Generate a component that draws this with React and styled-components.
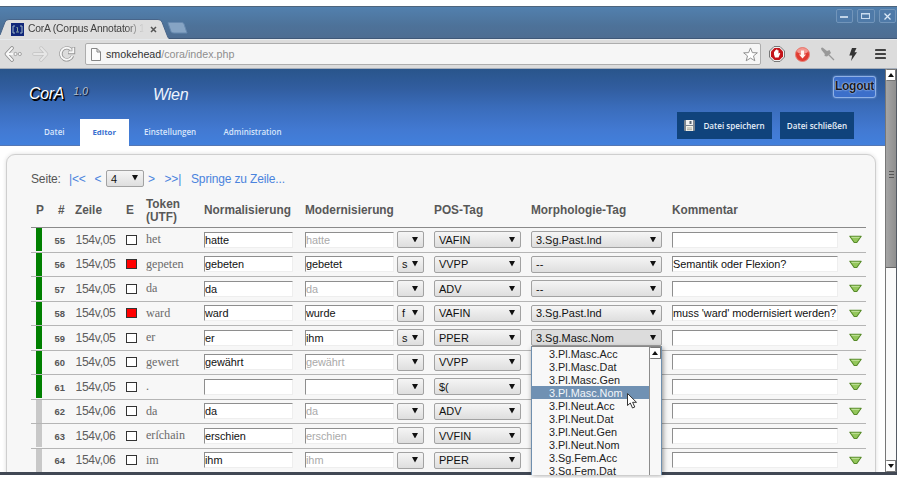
import React from 'react';
import styled, { createGlobalStyle, css } from 'styled-components';

const GlobalStyle = createGlobalStyle`
    * {
        box-sizing: border-box;
    }
    body {
        margin: 0;
        background: #fff;
        font-family: "Liberation Sans", Arial, sans-serif;
        overflow: hidden;
    }
    svg {
        display: block;
        flex: none;
    }
`

const Desktop = styled.div`
    position: relative;
    width: 897px;
    height: 478px;
    padding-top: 6px;
    overflow: hidden;
    background: #fff;
`

const BrowserWindow = styled.div`
    display: flex;
    flex-direction: column;
    height: 469px;
    border-bottom: 3px solid #414854;
`

/* window title with the tabs */

const TitleBar = styled.div`
    display: flex;
    align-items: flex-end;
    flex: none;
    height: 33px;
    border-top: 1px solid #4d647c;
    border-bottom: 1px solid #3f5878;
    background: linear-gradient(#5280ae, #4d7299 60%, #4e6d92);
`

const Tab = styled.div`
    position: relative;
    flex: none;
    width: 169px;
    height: 20px;
    margin-bottom: -1px;
`

const TabShape = styled.svg`
    position: absolute;
    left: 0;
    top: 0;
`

const TabContent = styled.div`
    position: relative;
    display: flex;
    align-items: center;
    height: 20px;
    padding-left: 11px;
`

const TabTitle = styled.div`
    width: 116px;
    margin-left: 4px;
    overflow: hidden;
    white-space: nowrap;
    font-size: 10.3px;
    letter-spacing: -0.18px;
    line-height: 14px;
    color: #404040;
    mask-image: linear-gradient(to right, #000 84%, transparent);
`

const NewTab = styled.svg`
    margin: 0 0 4px -2px;
`

const WindowButtons = styled.div`
    display: flex;
    gap: 4px;
    align-self: flex-start;
    margin: 2px 1px 0 auto;
`

const WindowButton = styled.div`
    display: flex;
    align-items: center;
    justify-content: center;
    width: 17.5px;
    height: 14px;
    border: 1px solid #7295ba;
    border-radius: 2px;
    background: #4f7aa8;
`

/* address bar */

const Toolbar = styled.div`
    display: flex;
    align-items: center;
    flex: none;
    height: 30px;
    padding-left: 4px;
    border-top: 1px solid #e6e9ec;
    border-bottom: 1px solid #a5adb9;
    background: #dcdcdc;
`

const NavIcons = styled.div`
    display: flex;
    align-items: center;
    width: 81px;
    gap: 9px;
`

const AddressBox = styled.div`
    display: flex;
    align-items: center;
    width: 676px;
    height: 22px;
    padding: 0 2px 0 5px;
    border: 1px solid #adadad;
    border-radius: 2px;
    background: #f6f6f6;
`

const Url = styled.div`
    flex: 1;
    margin-left: 5px;
    font-size: 10.7px;
    line-height: 14px;
    color: #8e8e8e;
    b {
        font-weight: normal;
        color: #333;
    }
`

const Extensions = styled.div`
    display: flex;
    align-items: center;
    flex: 1;
    padding-left: 7px;
`

const Extension = styled.div`
    display: flex;
    align-items: center;
    justify-content: center;
    width: ${props => props.$width || 25}px;
`

/* page */

const Viewport = styled.div`
    display: flex;
    flex: 1;
    min-height: 0;
    border-right: 1px solid #555b64;
`

const Page = styled.div`
    width: 885px;
    height: 403px;
    overflow: hidden;
    background: #fff;
`

const Header = styled.div`
    display: flex;
    flex-direction: column;
    justify-content: space-between;
    height: 77px;
    border-bottom: 1px solid #5577b4;
    background: linear-gradient(#29558b, #315d9f 25%, #3a6cba 50%, #4279d2 80%, #4280dc);
`

const HeaderTop = styled.div`
    display: flex;
    align-items: flex-start;
    height: 43px;
    padding: 7px 9px 0 29px;
`

const Logo = styled.div`
    width: 44.5px;
    margin-top: 9px;
    font-size: 15.8px;
    letter-spacing: -0.2px;
    line-height: 18px;
    font-style: italic;
    color: #fff;
    text-shadow: 1px 1px 1px #000, 1.5px 1.5px 0 #000;
`

const Version = styled.div`
    width: 79.5px;
    margin-top: 10px;
    font-size: 10.4px;
    line-height: 12px;
    font-style: italic;
    color: #b4bfcf;
    text-shadow: 1px 1px 1px #102040, 1px 1px 0 #1d2f50;
`

const Project = styled.div`
    flex: 1;
    margin-top: 9px;
    font-size: 16px;
    letter-spacing: -0.2px;
    line-height: 19px;
    font-style: italic;
    color: #eef4fd;
`

const Logout = styled.div`
    width: 43px;
    height: 22px;
    border: 1px solid #8fb1e6;
    border-radius: 3px;
    box-shadow: 0 0 2px #86aae4;
    background: #3c6fca;
    font-size: 12px;
    letter-spacing: -0.25px;
    line-height: 19px;
    font-weight: bold;
    text-align: center;
    color: #15181f;
    text-shadow: 0 0 2px #dbe7fa, 0 0 1px #9fc0f3;
`

const HeaderBottom = styled.div`
    display: flex;
    justify-content: space-between;
    height: 34px;
    margin-bottom: -1px;
    padding: 0 31px 0 28px;
`

const Menu = styled.div`
    display: flex;
    align-items: flex-end;
    font-family: "Open Sans", "Noto Sans", sans-serif;
    font-size: 8px;
`

const MenuItem = styled.div`
    width: ${props => props.$width}px;
    height: 27px;
    padding-left: ${props => props.$indent}px;
    line-height: 26px;
    font-weight: 600;
    color: #d8e6fb;
    ${props => props.$active && css`
        background: #fff;
        color: #3a6fd0;
        font-size: 7.8px;
        font-weight: 700;
    `}
`

const FileButtons = styled.div`
    display: flex;
    gap: 8px;
`

const FileButton = styled.div`
    display: flex;
    align-items: center;
    justify-content: center;
    gap: 8px;
    width: ${props => props.$width}px;
    height: 27px;
    background: #10437c;
    color: #e6eef8;
    font-family: "Open Sans", "Noto Sans", sans-serif;
    font-size: 8.1px;
    font-weight: 600;
    white-space: nowrap;
`

const Panel = styled.div`
    width: 870px;
    height: 340px;
    margin: 8px 0 0 6px;
    padding: 0 9px 0 24px;
    border: 1px solid #cfcfcf;
    border-radius: 9px;
    box-shadow: 0 0 4px #ddd;
    background: #f7f7f7;
    color: #555;
`

const Pager = styled.div`
    display: flex;
    align-items: center;
    height: 39px;
    padding-top: 8px;
    font-size: 12px;
    letter-spacing: -0.15px;
    white-space: pre;
`

const PagerLabel = styled.span`
    width: 38px;
`

const PagerLink = styled.span`
    width: ${props => props.$width}px;
    margin-left: ${props => props.$gap || 0}px;
    color: #4a83dd;
`

const GridRow = styled.div`
    display: grid;
    grid-template-columns: 16px 28px 51px 20px 58px 101px 92px 37px 97px 141px 177px 17px;
    align-items: center;
    width: 835px;
`

const HeadRow = styled(GridRow)`
    height: 34px;
    border-bottom: 1px solid #8a8a8a;
    font-size: 11.85px;
    line-height: 12.5px;
    font-weight: bold;
    color: #585858;
`

const HeadCell = styled.div`
    padding-left: ${props => props.$indent || 0}px;
    white-space: pre-line;
`

const Row = styled(GridRow)`
    height: 24.5px;
    border-bottom: 1px solid #b5b5b5;
`

const Progress = styled.div`
    width: 6px;
    height: 23px;
    margin-left: 5px;
    background: ${props => (props.$done ? '#008000' : '#c8c8c8')};
`

const TokenNumber = styled.div`
    padding: 1px 10px 0 0;
    font-size: 9.4px;
    font-weight: bold;
    text-align: right;
`

const LineRef = styled.div`
    padding-left: 0.5px;
    font-size: 12.1px;
    letter-spacing: -0.3px;
    white-space: nowrap;
    color: #5e5e5e;
`

const Checkbox = styled.div`
    width: 11px;
    height: 10px;
    border: 1px solid #333;
    background: ${props => (props.$error ? '#f00' : '#fff')};
`

const Token = styled.div`
    font-family: "Liberation Serif", serif;
    font-size: 12.1px;
    color: #6b6b6b;
`

const Field = styled.div`
    width: ${props => props.$width}px;
    height: 16px;
    border: 1px solid #eee;
    border-top: 1px solid #8e8e8e;
    border-left: 1px solid #8e8e8e;
    background: #fff;
    font-size: 10.9px;
    line-height: 15px;
    letter-spacing: -0.05px;
    white-space: nowrap;
    color: ${props => (props.$suggested ? '#aaa' : '#111')};
`

const SelectBox = styled.div`
    display: flex;
    align-items: center;
    justify-content: space-between;
    width: ${props => props.$width}px;
    height: 17px;
    padding: 0 5px 0 4px;
    border: 1px solid #a2a2a2;
    border-radius: 2px;
    background: ${props => (props.$open ? '#dcdcdc' : 'linear-gradient(#f5f5f5, #dedede)')};
    font-size: 10.95px;
    line-height: 16px;
    letter-spacing: 0;
    white-space: nowrap;
    color: #111;
    svg {
        margin-top: -1px;
    }
`

/* option list of the opened select box */

const Options = styled.div`
    position: absolute;
    left: 531px;
    top: 346px;
    display: flex;
    width: 131px;
    height: 129px;
    overflow: hidden;
    border: 1px solid #6f8fae;
    border-top-color: #888;
    border-bottom: none;
    background: #f8f8f8;
`

const OptionList = styled.div`
    flex: 1;
`

const Option = styled.div`
    height: 13.05px;
    padding-left: 17px;
    font-size: 10.85px;
    line-height: 14px;
    white-space: nowrap;
    color: ${props => (props.$selected ? '#f2f6fa' : '#222')};
    background: ${props => (props.$selected ? '#7091b3' : 'none')};
`

const OptionShadow = styled.div`
    position: absolute;
    left: 531px;
    top: 348px;
    width: 131px;
    height: 127px;
    box-shadow: 1px 0 5px rgba(0, 0, 0, 0.45);
`

const OptionScroll = styled.div`
    width: 12px;
    border-left: 1px solid #8c8c8c;
`

const Scrollbar = styled.div`
    display: flex;
    flex-direction: column;
    width: 11px;
    height: 403px;
    background: #fafafa;
    border-left: 1px solid #777;
`

const ScrollButton = styled.div`
    display: flex;
    align-items: center;
    justify-content: center;
    flex: none;
    height: 12px;
    border: 1px solid #777;
    border-left: none;
    border-radius: 1px;
    background: #fff;
`

const ScrollThumb = styled.div`
    display: flex;
    align-items: center;
    justify-content: center;
    height: 187px;
    margin-bottom: auto;
    border-bottom: 1px solid #666;
    background: linear-gradient(to right, #a5a5a5, #8f8f8f);
`

const Cursor = styled.svg`
    position: absolute;
    left: 626px;
    top: 392px;
`

const Triangle = ({ up, w = 6, h = 4 }) => (
    <svg width={w} height={h} viewBox="0 0 6 4" preserveAspectRatio="none">
        <path d={up ? 'M0 4L3 0L6 4Z' : 'M0 0H6L3 4Z'} fill="#111" />
    </svg>
)

const Select = ({ width, value, open }) => (
    <SelectBox $width={width} $open={open}>
        <span>{value}</span>
        <Triangle w={6} h={5.5} />
    </SelectBox>
)

const GreenArrow = () => (
    <svg width="13" height="9" viewBox="0 0 13 9">
        <path d="M0.800 1.300H12.200L7.800 7.500H5.200Z" fill="#94c75b" stroke="#568a28" strokeWidth="1.100" strokeLinejoin="round" />
        <path d="M2.500 2.400H10.500" stroke="#c0e09a" />
    </svg>
)

const Floppy = () => (
    <svg width="11" height="11" viewBox="0 0 11 11">
        <rect width="11" height="11" rx="1" fill="#7e8791" />
        <rect x="2" y="0" width="7" height="5" fill="#f1f1f1" />
        <rect x="5.5" y="1" width="2" height="3" fill="#596572" />
        <rect x="2" y="6" width="7" height="5" fill="#f5f3ea" />
        <path d="M3 8H8M3 9.7H8" stroke="#8a8a80" strokeWidth="0.7" />
    </svg>
)

const rows = [
    { id: 55, line: '154v,05', token: 'het', norm: 'hatte', mod: 'hatte', suggested: true, flag: '', pos: 'VAFIN', morph: '3.Sg.Past.Ind', done: true },
    { id: 56, line: '154v,05', error: true, token: 'gepeten', norm: 'gebeten', mod: 'gebetet', flag: 's', pos: 'VVPP', morph: '--', comment: 'Semantik oder Flexion?', done: true },
    { id: 57, line: '154v,05', token: 'da', norm: 'da', mod: 'da', suggested: true, flag: '', pos: 'ADV', morph: '--', done: true },
    { id: 58, line: '154v,05', error: true, token: 'ward', norm: 'ward', mod: 'wurde', flag: 'f', pos: 'VAFIN', morph: '3.Sg.Past.Ind', comment: "muss 'ward' modernisiert werden?", done: true },
    { id: 59, line: '154v,05', token: 'er', norm: 'er', mod: 'ihm', flag: 's', pos: 'PPER', morph: '3.Sg.Masc.Nom', open: true, done: true },
    { id: 60, line: '154v,05', token: 'gewert', norm: 'gewährt', mod: 'gewährt', suggested: true, flag: '', pos: 'VVPP', morph: '', done: true },
    { id: 61, line: '154v,05', token: '.', norm: '', mod: '', flag: '', pos: '$(', morph: '', done: true },
    { id: 62, line: '154v,06', token: 'da', norm: 'da', mod: 'da', suggested: true, flag: '', pos: 'ADV', morph: '' },
    { id: 63, line: '154v,06', token: 'erſchain', norm: 'erschien', mod: 'erschien', suggested: true, flag: '', pos: 'VVFIN', morph: '' },
    { id: 64, line: '154v,06', token: 'im', norm: 'ihm', mod: 'ihm', suggested: true, flag: '', pos: 'PPER', morph: '' },
]

const options = [
    '3.Pl.Masc.Acc',
    '3.Pl.Masc.Dat',
    '3.Pl.Masc.Gen',
    '3.Pl.Masc.Nom',
    '3.Pl.Neut.Acc',
    '3.Pl.Neut.Dat',
    '3.Pl.Neut.Gen',
    '3.Pl.Neut.Nom',
    '3.Sg.Fem.Acc',
    '3.Sg.Fem.Dat',
]

const BrowserChrome = () => (
    <>
        <TitleBar>
            <Tab>
                <TabShape width="169" height="20" viewBox="0 0 169 20">
                    <path d="M0 20V16L5 3Q6 0.5 9 0.5H158Q161 0.5 162 3L167 16Q168 19 169 20Z" fill="#dedede" />
                    <path d="M0 16L5 3Q6 0.5 9 0.5H158Q161 0.5 162 3L167 16Q168 19 169 19.5" fill="none" stroke="#48658a" />
                </TabShape>
                <TabContent>
                    <svg width="13" height="13" viewBox="0 0 13 13">
                        <rect width="13" height="13" fill="#11277a" />
                        <path d="M4 3H2V10H4M9 3H11V10H9" fill="none" stroke="#9fb9c9" />
                        <path d="M5.5 4.5H6.5V8.5M5 9H8" fill="none" stroke="#8ba6a0" />
                    </svg>
                    <TabTitle>CorA (Corpus Annotator) 1</TabTitle>
                    <svg width="7" height="7" viewBox="0 0 7 7" style={{ marginLeft: 6 }}>
                        <path d="M1 1L6 6M6 1L1 6" stroke="#555" strokeWidth="1.5" />
                    </svg>
                </TabContent>
            </Tab>
            <NewTab width="21" height="12" viewBox="0 0 21 12">
                <path d="M1 1Q0.5 0.5 2 0.5H15Q16.5 0.5 17 2L20 11H7Q4.500 11 4 9.500Z" fill="#86a4c4" stroke="#6789af" />
            </NewTab>
            <WindowButtons>
                <WindowButton>
                    <svg width="8" height="8" viewBox="0 0 8 8"><path d="M0 5H8" stroke="#dce9f7" strokeWidth="1.6" /></svg>
                </WindowButton>
                <WindowButton>
                    <svg width="9" height="8" viewBox="0 0 9 8"><path d="M0.500 1.500H8.500V6.500H0.500ZM0.500 2H8.500" fill="none" stroke="#c8dbef" strokeWidth="1.1" /></svg>
                </WindowButton>
                <WindowButton>
                    <svg width="7" height="7" viewBox="0 0 7 7"><path d="M0.500 0.500L6.500 6.500M6.500 0.500L0.500 6.500" stroke="#dce9f7" strokeWidth="1.3" /></svg>
                </WindowButton>
            </WindowButtons>
        </TitleBar>
        <Toolbar>
            <NavIcons>
                <svg width="19" height="16" viewBox="0 0 19 16">
                    <path d="M8 2L2.500 8L8 14" fill="none" stroke="#8c8c8c" strokeWidth="3.600" strokeLinejoin="round" strokeLinecap="round" />
                    <path d="M8 2L2.500 8L8 14M3 8H9" fill="none" stroke="#f8f8f8" strokeWidth="2" strokeLinejoin="round" strokeLinecap="round" />
                    <circle cx="11.500" cy="8" r="1.600" fill="#f5f5f5" stroke="#939393" strokeWidth="0.800" />
                    <circle cx="15.800" cy="8" r="1.600" fill="#f5f5f5" stroke="#939393" strokeWidth="0.800" />
                </svg>
                <svg width="17" height="16" viewBox="0 0 17 16">
                    <path d="M9 2L14.500 8L9 14M2 8H12" fill="none" stroke="#c2c2c2" strokeWidth="3.400" strokeLinejoin="round" strokeLinecap="round" />
                    <path d="M9 2L14.500 8L9 14M2 8H13" fill="none" stroke="#e6e6e6" strokeWidth="2" strokeLinejoin="round" strokeLinecap="round" />
                </svg>
                <svg width="18" height="18" viewBox="0 0 18 18">
                    <path d="M14.500 11A6 6 0 1 1 13 4.500M15.500 2V7.500H10" fill="none" stroke="#939393" strokeWidth="3.400" />
                    <path d="M14.300 11A6 6 0 1 1 13 4.500M15.300 2.500V7.300H10.500" fill="none" stroke="#f7f7f7" strokeWidth="1.900" />
                </svg>
            </NavIcons>
            <AddressBox>
                <svg width="10" height="13" viewBox="0 0 10 13">
                    <path d="M0.500 0.500H6L9.500 4V12.500H0.500ZM6 0.500V4H9.500" fill="#fcfcfc" stroke="#858585" />
                </svg>
                <Url><b>smokehead</b>/cora/index.php</Url>
                <svg width="15" height="15" viewBox="0 0 16 16">
                    <path d="M8 1L10 6L15.300 6.200L11.200 9.500L12.600 14.700L8 11.800L3.400 14.700L4.800 9.500L0.700 6.200L6 6Z" fill="#fff" stroke="#8c8c8c" />
                </svg>
            </AddressBox>
            <Extensions>
                <Extension $width={17}>
                    <svg width="16" height="16" viewBox="0 0 16 16">
                        <path d="M5 0.500H11L15.500 5V11L11 15.500H5L0.500 11V5Z" fill="#eee" stroke="#777" />
                        <path d="M5.500 2H10.500L14 5.500V10.500L10.500 14H5.500L2 10.500V5.500Z" fill="#c4141a" />
                        <path d="M5 8.500V5.500H6V4.200H7V3.600H8.300V4.200H9.500V7.500L11 6.700L11.200 7.600L9.500 11.500H6Z" fill="#fff" />
                    </svg>
                </Extension>
                <Extension $width={34}>
                    <svg width="15" height="15" viewBox="0 0 15 15">
                        <circle cx="7.500" cy="7.500" r="7" fill="#e03b31" stroke="#e78177" />
                        <ellipse cx="7.500" cy="4" rx="5.500" ry="3" fill="#f39a92" />
                        <path d="M6 3.500H9V7.500H11L7.500 11.500L4 7.500H6Z" fill="#fff4ee" />
                    </svg>
                </Extension>
                <Extension $width={17}>
                    <svg width="15" height="14" viewBox="0 0 15 14">
                        <path d="M1 1L2.500 0.500L7 4L9.500 3L11 6L7 9.500L4.500 9L4.800 7L1.500 3Z" fill="#999" />
                        <path d="M8 7L14 13" stroke="#999" strokeWidth="1.200" />
                    </svg>
                </Extension>
                <Extension $width={34}>
                    <svg width="8" height="13" viewBox="0 0 8 13">
                        <path d="M3 0H7.500L5.500 4.200H8L2 13L3.200 7.500H0.300Z" fill="#333" />
                    </svg>
                </Extension>
                <Extension $width={20}>
                    <svg width="11" height="12" viewBox="0 0 11 12">
                        <path d="M1 2H10M1 6H10M1 10H10" stroke="#424242" strokeWidth="2.200" strokeLinecap="round" />
                    </svg>
                </Extension>
            </Extensions>
        </Toolbar>
    </>
)

const PageHeader = () => (
    <Header>
        <HeaderTop>
            <Logo>CorA</Logo>
            <Version>1.0</Version>
            <Project>Wien</Project>
            <Logout>Logout</Logout>
        </HeaderTop>
        <HeaderBottom>
            <Menu>
                <MenuItem $width={52} $indent={16}>Datei</MenuItem>
                <MenuItem $width={49} $indent={12.5} $active>Editor</MenuItem>
                <MenuItem $width={80} $indent={15}>Einstellungen</MenuItem>
                <MenuItem $width={80} $indent={14.5}>Administration</MenuItem>
            </Menu>
            <FileButtons>
                <FileButton $width={95}><Floppy />Datei speichern</FileButton>
                <FileButton $width={74}>Datei schließen</FileButton>
            </FileButtons>
        </HeaderBottom>
    </Header>
)

const TokenRow = ({ row }) => (
    <Row>
        <Progress $done={row.done} />
        <TokenNumber>{row.id}</TokenNumber>
        <LineRef>{row.line}</LineRef>
        <Checkbox $error={row.error} />
        <Token>{row.token}</Token>
        <Field $width={89}>{row.norm}</Field>
        <Field $width={89} $suggested={row.suggested}>{row.mod}</Field>
        <Select width={27} value={row.flag} />
        <Select width={87} value={row.pos} />
        <Select width={131} value={row.morph} open={row.open} />
        <Field $width={166}>{row.comment}</Field>
        <GreenArrow />
    </Row>
)

const App = () => (
    <Desktop>
        <GlobalStyle />
        <BrowserWindow>
            <BrowserChrome />
            <Viewport>
                <Page>
                    <PageHeader />
                    <Panel>
                        <Pager>
                            <PagerLabel>Seite:</PagerLabel>
                            <PagerLink $width={25.5}>|&lt;&lt;</PagerLink>
                            <PagerLink $width={11.5}>&lt;</PagerLink>
                            <Select width={38} value="4" />
                            <PagerLink $width={16.5} $gap={4}>&gt;</PagerLink>
                            <PagerLink $width={26.5}>&gt;&gt;|</PagerLink>
                            <PagerLink>Springe zu Zeile...</PagerLink>
                        </Pager>
                        <HeadRow>
                            <HeadCell $indent={5}>P</HeadCell>
                            <HeadCell $indent={11}>#</HeadCell>
                            <HeadCell>Zeile</HeadCell>
                            <HeadCell>E</HeadCell>
                            <HeadCell>{'Token\n(UTF)'}</HeadCell>
                            <HeadCell>Normalisierung</HeadCell>
                            <HeadCell>Modernisierung</HeadCell>
                            <HeadCell />
                            <HeadCell>POS-Tag</HeadCell>
                            <HeadCell>Morphologie-Tag</HeadCell>
                            <HeadCell>Kommentar</HeadCell>
                        </HeadRow>
                        {rows.map(row => <TokenRow key={row.id} row={row} />)}
                    </Panel>
                </Page>
                <Scrollbar>
                    <ScrollButton><Triangle up /></ScrollButton>
                    <ScrollThumb>
                        <svg width="5" height="7" viewBox="0 0 5 7"><path d="M0 0.500H5M0 3.500H5M0 6.500H5" stroke="#555" /></svg>
                    </ScrollThumb>
                    <ScrollButton><Triangle /></ScrollButton>
                </Scrollbar>
            </Viewport>
        </BrowserWindow>
        <OptionShadow />
        <Options>
            <OptionList>
                {options.map(option => (
                    <Option key={option} $selected={option === '3.Pl.Masc.Nom'}>{option}</Option>
                ))}
            </OptionList>
            <OptionScroll>
                <ScrollButton><Triangle up /></ScrollButton>
            </OptionScroll>
        </Options>
        <Cursor width="13" height="18" viewBox="0 0 13 18">
            <path d="M1.500 1.500V13.500L4.300 11L6.500 16L8.800 15L6.600 10.300H10.500Z" fill="#fff" stroke="#333" />
        </Cursor>
    </Desktop>
)

export default App;
